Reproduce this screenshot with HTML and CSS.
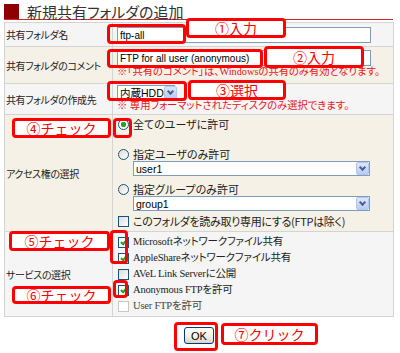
FILE: index.html
```html
<!DOCTYPE html>
<html lang="ja">
<head>
    <meta charset="UTF-8">
    <meta name="viewport" content="width=device-width, initial-scale=1.0">
    <title>新規共有フォルダの追加</title>
    <link rel="stylesheet" href="styles.css">
</head>
<body>
<div class="page">
    <h1 class="title"><span class="mark"></span>新規共有フォルダの追加</h1>

    <table class="form">
        <colgroup><col class="c-label"><col></colgroup>
        <tr class="gray row1">
            <th>共有フォルダ名</th>
            <td><input class="text" type="text" value="ftp-all"></td>
        </tr>
        <tr class="beige row2">
            <th>共有フォルダのコメント</th>
            <td>
                <input class="text" type="text" value="FTP for all user (anonymous)">
                <div class="note">※「共有のコメント」は、Windowsの共有のみ有効となります。</div>
            </td>
        </tr>
        <tr class="gray row3">
            <th>共有フォルダの作成先</th>
            <td>
                <div class="select small"><span>内蔵HDD</span><span class="arrow"></span></div>
                <div class="note">※ 専用フォーマットされたディスクのみ選択できます。</div>
            </td>
        </tr>
        <tr class="beige row4">
            <th>アクセス権の選択</th>
            <td>
                <label class="opt"><input type="radio" name="acl" checked>全てのユーザに許可</label>
                <div class="blank"></div>
                <label class="opt"><input type="radio" name="acl">指定ユーザのみ許可</label>
                <div class="select wide"><span>user1</span><span class="arrow"></span></div>
                <label class="opt gap"><input type="radio" name="acl">指定グループのみ許可</label>
                <div class="select wide"><span>group1</span><span class="arrow"></span></div>
                <label class="opt gap2 ro"><input type="checkbox">このフォルダを読み取り専用にする(FTPは除く)</label>
            </td>
        </tr>
        <tr class="gray row5">
            <th>サービスの選択</th>
            <td>
                <label class="svc"><input type="checkbox" checked>Microsoftネットワークファイル共有</label>
                <label class="svc"><input type="checkbox" checked>AppleShareネットワークファイル共有</label>
                <label class="svc"><input type="checkbox">AVeL Link Serverに公開</label>
                <label class="svc"><input type="checkbox" checked>Anonymous FTPを許可</label>
                <label class="svc off"><input type="checkbox" disabled>User FTPを許可</label>
            </td>
        </tr>
    </table>

    <div class="actions"><button class="ok">OK</button></div>

    <!-- annotations -->
    <div class="hl" style="left:107px;top:24px;width:79px;height:20px"></div>
    <div class="tag" style="left:186px;top:18px;width:100px;height:20px">①入力</div>
    <div class="hl" style="left:107px;top:49px;width:156px;height:19px"></div>
    <div class="tag" style="left:264px;top:46px;width:100px;height:22px">②入力</div>
    <div class="hl" style="left:107px;top:81px;width:80px;height:20px"></div>
    <div class="tag" style="left:188px;top:80px;width:98px;height:20px">③選択</div>
    <div class="tag" style="left:12px;top:118px;width:99px;height:20px">④チェック</div>
    <div class="hl" style="left:113px;top:118px;width:19px;height:20px"></div>
    <div class="tag" style="left:9px;top:231px;width:101px;height:20px">⑤チェック</div>
    <div class="hl" style="left:110px;top:230px;width:18px;height:34px"></div>
    <div class="tag" style="left:12px;top:286px;width:99px;height:18px">⑥チェック</div>
    <div class="hl" style="left:113px;top:280px;width:15px;height:18px"></div>
    <div class="hl" style="left:174px;top:322px;width:44px;height:29px"></div>
    <div class="tag" style="left:221px;top:323px;width:97px;height:22px">⑦クリック</div>
</div>
</body>
</html>
```

FILE: styles.css
```css
body {
    margin: 0;
    font-family: "Noto Sans CJK JP", sans-serif;
    font-size: 11px;
    color: #222;
    font-feature-settings: "palt";
    background: #fff;
}
.page {
    position: relative;
    width: 400px;
    height: 353px;
}
.title {
    display: flex;
    align-items: center;
    gap: 8px;
    margin: 0 7px 0 4px;
    padding-top: 4px;
    height: 15px;
    font-size: 15px;
    line-height: 15px;
    font-weight: normal;
    color: #333;
    border-bottom: 1px solid #cc2a2a;
}
.mark {
    width: 15px;
    height: 15px;
    background: #8e0000;
}
.form {
    margin: 2px 0 0 4px;
    width: 390px;
    table-layout: fixed;
    border-collapse: collapse;
    border: 1px solid #bdbdbd;
}
.c-label {
    width: 108px;
}
.form th,
.form td {
    border: 1px solid #d4d4d4;
}
.form th {
    padding: 0 1px;
    text-align: left;
    font-weight: normal;
    font-size: 10px;
    letter-spacing: -0.4px;
    white-space: nowrap;
    vertical-align: middle;
}
.form td {
    padding: 0 4px;
    vertical-align: top;
}
.gray th,
.gray td {
    background: #f5f5f5;
}
.beige th,
.beige td {
    background: #f6f1e6;
}
.row1 td { padding-top: 4px; padding-bottom: 3px; }
.row2 td { padding-top: 3px; padding-bottom: 5px; }
.row3 td { padding-top: 1px; padding-bottom: 2px; }
.row4 td { padding-top: 2px; padding-bottom: 3px; }
.row5 td { padding-top: 2px; padding-bottom: 2px; }

.text {
    display: block;
    box-sizing: border-box;
    width: 254px;
    height: 16px;
    margin: 0;
    padding: 0 2px;
    border: 1px solid #7f9db9;
    background: #fff;
    font-family: "Liberation Sans", sans-serif;
    font-size: 10px;
    color: #000;
}
.note {
    line-height: 12px;
    height: 12px;
    font-family: "Liberation Serif", "Noto Sans CJK JP", serif;
    font-size: 10.3px;
    color: #e8141c;
    white-space: nowrap;
}
.select {
    display: flex;
    align-items: center;
    justify-content: space-between;
    box-sizing: border-box;
    height: 15px;
    border: 1px solid #7f9db9;
    background: #fff;
    padding-left: 2px;
    font-family: "Liberation Sans", "Noto Sans CJK JP", sans-serif;
    font-size: 10.5px;
    white-space: nowrap;
    color: #000;
}
.select.small {
    width: 58px;
}
.select.wide {
    width: 237px;
    margin-left: 16px;
}
.arrow {
    position: relative;
    box-sizing: border-box;
    width: 13px;
    height: 13px;
    border: 1px solid #b6c7ee;
    border-radius: 2px;
    background: linear-gradient(#dbe5fd, #b9cbf6);
    flex: none;
}
.arrow::after {
    content: "";
    position: absolute;
    left: 3px;
    top: 2px;
    width: 3px;
    height: 3px;
    border-right: 2px solid #4d6185;
    border-bottom: 2px solid #4d6185;
    transform: rotate(45deg);
}
.opt,
.svc {
    display: flex;
    align-items: center;
    height: 14px;
    line-height: 14px;
    white-space: nowrap;
}
.ro {
    letter-spacing: -0.3px;
}
.svc {
    height: 16px;
    line-height: 16px;
    font-family: "Liberation Serif", "Noto Sans CJK JP", serif;
    font-size: 10.5px;
    letter-spacing: -0.2px;
}
.svc.off {
    color: #444;
}
.blank {
    height: 16px;
}
.gap {
    margin-top: 6px;
}
.gap2 {
    margin-top: 3px;
}
input[type="radio"],
input[type="checkbox"] {
    appearance: none;
    -webkit-appearance: none;
    position: relative;
    box-sizing: border-box;
    width: 11px;
    height: 11px;
    margin: 0 4px 0 1px;
    border: 1px solid #1c5180;
    background: linear-gradient(135deg, #dcdcd7, #fff);
    flex: none;
}
input[type="radio"] {
    border-radius: 50%;
}
input[type="radio"]:checked {
    background: radial-gradient(circle, #2ca02c 0 2.5px, #fff 3px);
}
input[type="checkbox"]:checked {
    background: #fff;
}
input[type="checkbox"]:checked::after {
    content: "";
    position: absolute;
    left: 2.5px;
    top: 0.5px;
    width: 2px;
    height: 5px;
    border-right: 2px solid #21a121;
    border-bottom: 2px solid #21a121;
    transform: rotate(40deg);
}
input[type="checkbox"]:disabled {
    border-color: #cac8bb;
    background: #fff;
}
.actions {
    display: flex;
    justify-content: center;
    width: 390px;
    margin: 10px 0 0 4px;
}
.ok {
    box-sizing: border-box;
    width: 30px;
    height: 17px;
    padding: 0;
    border: 1px solid #003c74;
    border-radius: 3px;
    background: linear-gradient(#fff, #f0efe8 60%, #d8d4c6);
    font-family: "Liberation Sans", sans-serif;
    font-size: 11px;
    color: #000;
}
.hl,
.tag {
    position: absolute;
    box-sizing: border-box;
    border: 3px solid #f00;
    border-radius: 4px;
}
.tag {
    display: flex;
    align-items: center;
    justify-content: center;
    background: #fff;
    color: #f00;
    font-size: 14px;
    line-height: 14px;
    font-feature-settings: normal;
}
```
